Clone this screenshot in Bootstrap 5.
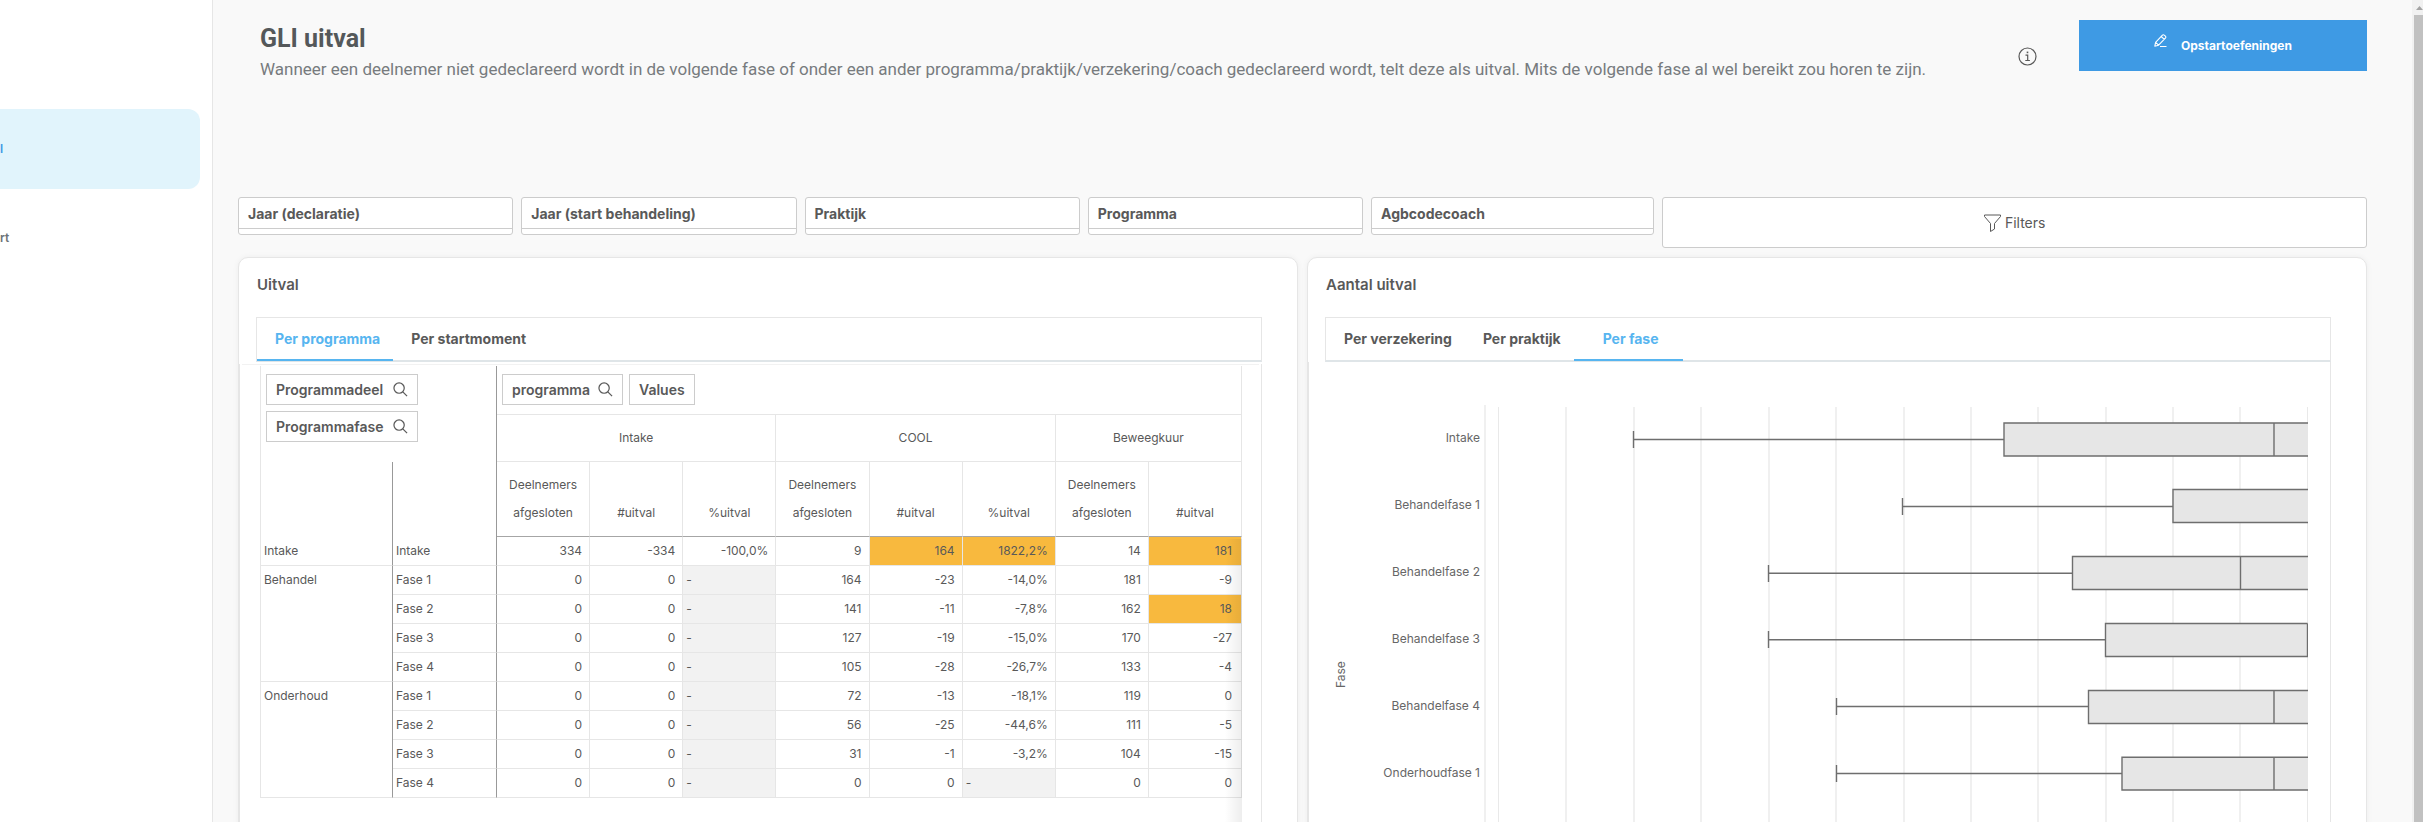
<!DOCTYPE html>
<html lang="nl">
<head>
<meta charset="utf-8">
<meta name="viewport" content="width=device-width, initial-scale=1">
<title>GLI uitval</title>
<link href="https://cdn.jsdelivr.net/npm/bootstrap@5.3.0/dist/css/bootstrap.min.css" rel="stylesheet">
<style>
  body { font-family: Inter, "Liberation Sans", sans-serif; font-size: 14px; color: #595959; background: #f9f9f9; }
  .side { width: 213px; background: #fff; border-right: 1px solid #e6e6e6; padding-top: 109px; font-size: 12px; font-weight: 600; }
  .side a { display: flex; align-items: center; height: 80px; color: #6c7377; text-decoration: none; }
  .side a.active { width: 200px; margin-bottom: 9px; background: #e1f4fc; color: #3e9ae4; border-radius: 0 12px 12px 0; }
  .content { padding: 0 45px 0 25px; }
  .track { width: 11px; background: #f1f1f1; }
  .track-up { height: 15px; padding: 6px 0 0 4px; }
  .track-thumb { margin-left: 2px; background: #c1c1c1; }

  .page-head { height: 197px; padding: 20px 0 0 22px; }
  .page-head h1 { margin: 3px 0 0; font: 700 25px/32px Roboto, sans-serif; color: #54585a; }
  .page-head p { margin: 0; font: 400 17px/28px Roboto, sans-serif; color: #777b7e; }
  .info { margin: 27px 42px 0 0; color: #595959; }
  .start-btn { width: 288px; height: 51px; border-radius: 0; background: #3e9ae4; color: #fff; font-size: 12px; font-weight: 700; }
  .start-btn svg { margin: 0 14px 10px 0; }

  .filters { display: grid; grid-template-columns: repeat(4, 275fr) 283fr 704fr; gap: 8px; align-items: start; }
  .pick { padding: 0 0 5px; height: 38px; text-align: left; background: #fff; border: 1px solid #ccc; border-radius: 3px; color: #595959; font-size: 14px; font-weight: 700; }
  .pick span { display: block; height: 31px; padding-left: 9px; line-height: 32px; border-bottom: 1px solid #ccc; }
  .all-filters { height: 51px; background: #fff; border: 1px solid #ccc; border-radius: 3px; color: #595959; font-size: 14px; }

  .panels { display: grid; grid-template-columns: 1fr 1fr; gap: 9px; margin-top: 9px; }
  .panel { min-width: 0; background: #fff; border: 1px solid #e6e6e6; border-radius: 10px; box-shadow: 0 0 6px rgba(0,0,0,.05); }
  .panel h2 { margin: 0 0 0 18px; height: 59px; font-size: 15px; line-height: 54px; font-weight: 600; color: #595959; }
  .tabs { margin: 0 35px 0 17px; height: 45px; border: 1px solid #e6e6e6; border-bottom: 2px solid #dfe5e8; }
  .tabs button { height: 43px; margin-bottom: -1px; padding: 0 13px 0 18px; border: 0; border-bottom: 2px solid transparent; background: none; color: #595959; font-size: 14px; font-weight: 700; }
  .tabs button.active { color: #57b5f0; border-bottom-color: #57b5f0; }
  .tabs .wide-tab { padding: 0 24px 0 29px; }
  .pane { position: relative; margin-right: 35px; height: 480px; border: 1px solid #e6e6e6; border-top: 0; }

  .pivot-wrap { padding: 0 19px 0 20px; }
  .pivot { width: 100%; table-layout: fixed; border-collapse: separate; border-spacing: 0; font-size: 12px; border-left: 1px solid #e6e6e6; }
  .pivot th, .pivot td { font-weight: 400; padding: 0 7px 0 3px; height: 29px; line-height: 28px; border: 0 solid #e6e6e6; border-width: 0 1px 1px 0; text-align: right; }
  .pivot td:last-child { padding-right: 9px; }
  .pivot tbody th { text-align: left; vertical-align: top; }
  .pivot thead th { text-align: center; padding: 0; vertical-align: bottom; }
  .pivot .dims { height: 49px; text-align: left; vertical-align: top; padding: 8px 0 0 5px; }
  .pivot .grp { height: 47px; vertical-align: middle; }
  .pivot .meas { height: 75px; padding-bottom: 9px; border-bottom-color: #a6a6a6; }
  .pivot .dark { border-right-color: #999; }
  .pivot .open { border-bottom: 0; }
  .pivot td.hot { background: #f8b93e; }
  .pivot td.nil { background: #f2f2f2; text-align: left; }
  .chips { display: flex; gap: 6px; }
  .chip { display: inline-flex; align-items: center; justify-content: space-between; height: 31px; padding: 0 9px; border: 1px solid #ccc; border-radius: 0; background: #fff; color: #595959; font-size: 14px; font-weight: 600; }
  .dim-chip { width: 152px; }
  .pane-line { height: 1px; margin: 2px 2px 1px; background: #f2f2f2; }
  .edge-fade { position: absolute; top: 175px; bottom: 0; right: 19px; width: 17px; background: linear-gradient(to right, transparent, rgba(0,0,0,.07)); }

  .plot { padding: 43px 22px 0 22px; font-size: 12px; color: #666; }
  .y-title { width: 20px; height: 283px; writing-mode: vertical-rl; transform: rotate(180deg); line-height: 20px; }
  .y-names { width: 133px; text-align: right; }
  .y-names div { height: 67px; line-height: 65px; }
  .plot svg { display: block; min-width: 0; height: 430px; }
</style>
</head>
<body class="vh-100 overflow-hidden">
<div class="d-flex vh-100">
  <nav class="side flex-shrink-0 overflow-hidden">
    <a class="active" href="#">l</a>
    <a href="#">rt</a>
  </nav>

  <main class="content flex-grow-1 overflow-hidden">
    <header class="page-head d-flex align-items-start">
      <div class="flex-grow-1">
        <h1>GLI uitval</h1>
        <p>Wanneer een deelnemer niet gedeclareerd wordt in de volgende fase of onder een ander programma/praktijk/verzekering/coach gedeclareerd wordt, telt deze als uitval. Mits de volgende fase al wel bereikt zou horen te zijn.</p>
      </div>
      <svg class="info flex-shrink-0" width="19" height="19" viewBox="0 0 19 19" fill="none" stroke="currentColor" stroke-width="1.200"><circle cx="9.500" cy="9.500" r="8.500"/><path d="M7.500 8.200h2.200v5.300M7.300 13.500h4.600"/><path d="M8.700 5.400h1.600" stroke-width="1.600"/></svg>
      <button type="button" class="btn start-btn flex-shrink-0 d-flex align-items-center justify-content-center p-0">
        <svg width="13" height="14" viewBox="0 0 13 14" fill="none" stroke="currentColor" stroke-width="1.100" stroke-linejoin="round"><path d="M.800 12.200L1.600 8.400 8.200 1.300Q9.300.300 10.500 1.300L11.400 2.100Q12.300 3.100 11.400 4.200L4.600 11.200zM1.600 8.400L4.600 11.200M7.200 2.500L10.300 5.300M6 12.500h6.500"/></svg>
        <span>Opstartoefeningen</span>
      </button>
    </header>

    <section class="filters">
      <button type="button" class="pick"><span>Jaar (declaratie)</span></button>
      <button type="button" class="pick"><span>Jaar (start behandeling)</span></button>
      <button type="button" class="pick"><span>Praktijk</span></button>
      <button type="button" class="pick"><span>Programma</span></button>
      <button type="button" class="pick"><span>Agbcodecoach</span></button>
      <button type="button" class="all-filters d-flex align-items-center justify-content-center gap-1">
        <svg width="17" height="18" viewBox="0 0 17 18" fill="none" stroke="currentColor"><path d="M.5 1h16v1.500l-6 7v5.500l-4 2.500v-8l-6-7z"/></svg>
        Filters
      </button>
    </section>

    <div class="panels">
      <section class="panel">
        <h2>Uitval</h2>
        <div class="tabs d-flex">
          <button type="button" class="active">Per programma</button>
          <button type="button">Per startmoment</button>
        </div>
        <div class="pane">
          <div class="pane-line"></div>
          <div class="pivot-wrap">
          <table class="pivot">
            <colgroup><col style="width:132px"><col style="width:104px"><col span="8"></colgroup>
            <thead>
              <tr>
                <th class="dims dark open" colspan="2" rowspan="2">
                  <div class="chips flex-column">
                    <button type="button" class="chip dim-chip">Programmadeel <svg width="15" height="15" viewBox="0 0 16 16" fill="none" stroke="currentColor" stroke-width="1.300"><circle cx="6.500" cy="6.500" r="5.500"/><path d="M10.500 10.500L15 15"/></svg></button>
                    <button type="button" class="chip dim-chip">Programmafase <svg width="15" height="15" viewBox="0 0 16 16" fill="none" stroke="currentColor" stroke-width="1.300"><circle cx="6.500" cy="6.500" r="5.500"/><path d="M10.500 10.500L15 15"/></svg></button>
                  </div>
                </th>
                <th class="dims" colspan="8">
                  <div class="chips">
                    <button type="button" class="chip gap-2">programma <svg width="15" height="15" viewBox="0 0 16 16" fill="none" stroke="currentColor" stroke-width="1.300"><circle cx="6.500" cy="6.500" r="5.500"/><path d="M10.500 10.500L15 15"/></svg></button>
                    <button type="button" class="chip">Values</button>
                  </div>
                </th>
              </tr>
              <tr>
                <th class="grp" colspan="3">Intake</th>
                <th class="grp" colspan="3">COOL</th>
                <th class="grp" colspan="2">Beweegkuur</th>
              </tr>
              <tr>
                <th class="dark open"></th>
                <th class="dark open"></th>
                <th class="meas">Deelnemers<br>afgesloten</th><th class="meas">#uitval</th><th class="meas">%uitval</th>
                <th class="meas">Deelnemers<br>afgesloten</th><th class="meas">#uitval</th><th class="meas">%uitval</th>
                <th class="meas">Deelnemers<br>afgesloten</th><th class="meas">#uitval</th>
              </tr>
            </thead>
            <tbody>
              <tr><th class="dark">Intake</th><th class="dark">Intake</th><td>334</td><td>-334</td><td>-100,0%</td><td>9</td><td class="hot">164</td><td class="hot">1822,2%</td><td>14</td><td class="hot">181</td></tr>
              <tr><th class="dark" rowspan="4">Behandel</th><th class="dark">Fase 1</th><td>0</td><td>0</td><td class="nil">-</td><td>164</td><td>-23</td><td>-14,0%</td><td>181</td><td>-9</td></tr>
              <tr><th class="dark">Fase 2</th><td>0</td><td>0</td><td class="nil">-</td><td>141</td><td>-11</td><td>-7,8%</td><td>162</td><td class="hot">18</td></tr>
              <tr><th class="dark">Fase 3</th><td>0</td><td>0</td><td class="nil">-</td><td>127</td><td>-19</td><td>-15,0%</td><td>170</td><td>-27</td></tr>
              <tr><th class="dark">Fase 4</th><td>0</td><td>0</td><td class="nil">-</td><td>105</td><td>-28</td><td>-26,7%</td><td>133</td><td>-4</td></tr>
              <tr><th class="dark" rowspan="4">Onderhoud</th><th class="dark">Fase 1</th><td>0</td><td>0</td><td class="nil">-</td><td>72</td><td>-13</td><td>-18,1%</td><td>119</td><td>0</td></tr>
              <tr><th class="dark">Fase 2</th><td>0</td><td>0</td><td class="nil">-</td><td>56</td><td>-25</td><td>-44,6%</td><td>111</td><td>-5</td></tr>
              <tr><th class="dark">Fase 3</th><td>0</td><td>0</td><td class="nil">-</td><td>31</td><td>-1</td><td>-3,2%</td><td>104</td><td>-15</td></tr>
              <tr><th class="dark">Fase 4</th><td>0</td><td>0</td><td class="nil">-</td><td>0</td><td>0</td><td class="nil">-</td><td>0</td><td>0</td></tr>
            </tbody>
          </table>
          </div>
          <div class="edge-fade"></div>
        </div>
      </section>

      <section class="panel">
        <h2>Aantal uitval</h2>
        <div class="tabs d-flex">
          <button type="button">Per verzekering</button>
          <button type="button">Per praktijk</button>
          <button type="button" class="active wide-tab">Per fase</button>
        </div>
        <div class="pane plot d-flex">
          <div class="y-title flex-shrink-0">Fase</div>
          <div class="y-names flex-shrink-0 pe-1">
            <div>Intake</div><div>Behandelfase 1</div><div>Behandelfase 2</div><div>Behandelfase 3</div><div>Behandelfase 4</div><div>Onderhoudfase 1</div>
          </div>
          <svg class="flex-grow-1" width="100" viewBox="0 0 824 430" preserveAspectRatio="none">
            <path fill="none" stroke="#f0f0f0" stroke-width="2" d="M1 0V430M82 2V430M150 2V430M217 2V430M285 2V430M352 2V430M420 2V430M487 2V430M554 2V430M622 2V430M689 2V430M756 2V430"/>
            <path fill="none" stroke="#e9e9e9" d="M14.500 2V430M823.500 2V430"/>
            <g fill="#e6e6e6" stroke="#6e6e6e" stroke-width="1.400">
              <path d="M149.500 26V43M149.500 34.500H520M830 18H520V51H830M790 18V51"/>
              <path d="M418.500 93V110M418.500 101.500H689M830 84.500H689V117.500H830"/>
              <path d="M284.500 160V177M284.500 168.200H588M830 151.500H588.500V184.500H830M756.500 151.500V184.500"/>
              <path d="M284.500 226V243M284.500 234.800H621M823.500 218.500H621.500V251.500H823.500V218.500"/>
              <path d="M352.500 293V310M352.500 301.500H605M830 285.500H604.500V318.500H830M790 285.500V318.500"/>
              <path d="M352.500 360V377M352.500 368.500H638M830 352.200H638V385H830M790 352.200V385"/>
            </g>
          </svg>
        </div>
      </section>
    </div>
  </main>

  <div class="track flex-shrink-0 d-flex flex-column" aria-hidden="true">
    <div class="track-up"><svg class="d-block" width="7" height="4" viewBox="0 0 7 4"><path d="M0 4l3.500-4L7 4z" fill="#a3a3a3"/></svg></div>
    <div class="track-thumb flex-grow-1"></div>
  </div>
</div>
<script src="https://cdn.jsdelivr.net/npm/bootstrap@5.3.0/dist/js/bootstrap.bundle.min.js"></script>
</body>
</html>
